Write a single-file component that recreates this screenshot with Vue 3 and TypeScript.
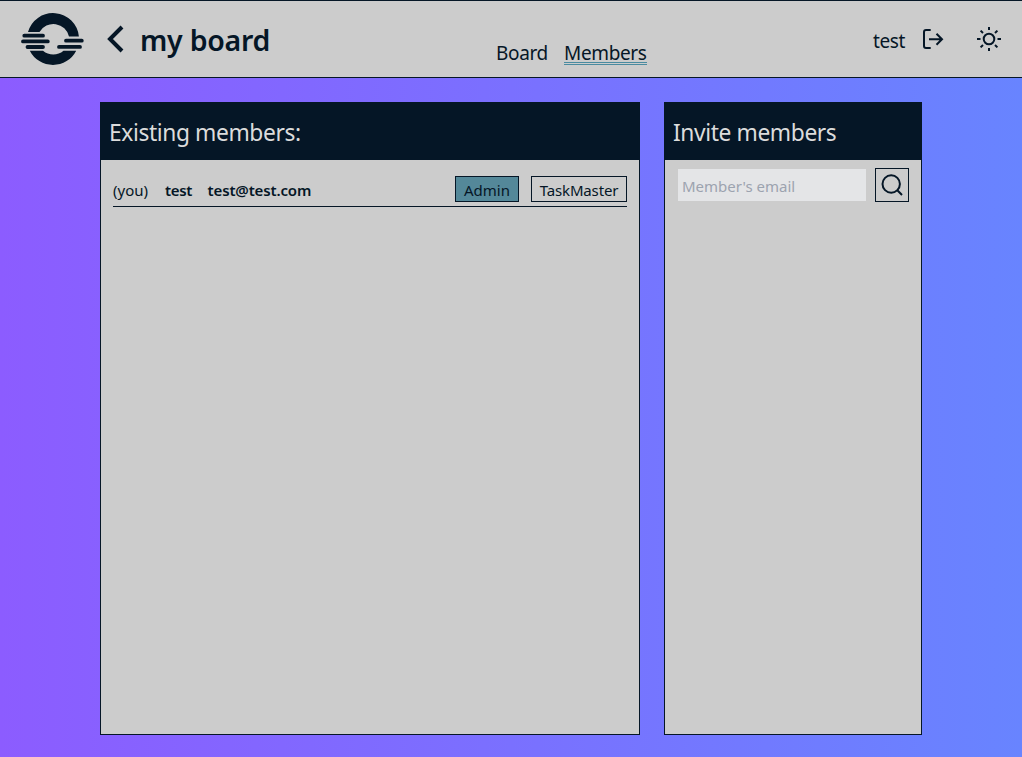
<script setup lang="ts">
import { ref } from 'vue'

interface Member {
  name: string
  email: string
  you: boolean
  roles: { label: string; active: boolean }[]
}

const email = ref('')
const members = ref<Member[]>([
  {
    name: 'test',
    email: 'test@test.com',
    you: true,
    roles: [
      { label: 'Admin', active: true },
      { label: 'TaskMaster', active: false },
    ],
  },
])
</script>

<template>
  <div class="page">
    <header class="header">
      <div class="left">
        <svg class="logo" width="64" height="54" viewBox="0 0 64 54">
          <path d="M8 20A26 26 0 0 1 58.9 24.5H49A16 16 0 0 0 19.5 20Z" />
          <path d="M9.8 38.7H23A16 16 0 0 0 43.5 38.7H56.2A26 26 0 0 1 9.8 38.7Z" />
          <g class="bars">
            <path d="M4.3 23.7H23M3 29.4H27.8M7.5 35H23M46 28.7H61.8M39 34.9H60" />
          </g>
        </svg>
        <svg class="back" width="20" height="30" viewBox="0 0 20 30">
          <path d="M17 3L5 15L17 27" />
        </svg>
        <h1 class="title">my board</h1>
      </div>
      <nav class="nav">
        <a class="link board">Board</a>
        <a class="link members">Members</a>
      </nav>
      <div class="right">
        <span class="user">test</span>
        <svg class="icon logout" width="24" height="24" viewBox="0 0 24 24">
          <path d="M9.7 3H5Q3 3 3 5V19Q3 21 5 21H9.7M8 12.2H20.8M15.5 6.7L21 12.2L15.5 17.7" />
        </svg>
        <svg class="icon sun" width="26" height="26" viewBox="0 0 26 26">
          <circle cx="13" cy="13" r="5.3" />
          <path d="M13 1V4M13 22V25M1 13H4.5M21.5 13H25M4.6 4.6L7 7M19 19L21.4 21.4M4.6 21.4L7 19M19 7L21.4 4.6" />
        </svg>
      </div>
    </header>

    <main class="content">
      <section class="panel existing">
        <h2 class="heading">Existing members:</h2>
        <ul class="list">
          <li v-for="m in members" :key="m.email" class="row">
            <span v-if="m.you" class="you">(you)</span>
            <strong class="name">{{ m.name }}</strong>
            <strong class="email">{{ m.email }}</strong>
            <div class="roles">
              <button
                v-for="r in m.roles"
                :key="r.label"
                class="role"
                :class="[r.label.toLowerCase(), { active: r.active }]"
              >{{ r.label }}</button>
            </div>
          </li>
        </ul>
      </section>

      <section class="panel invite">
        <h2 class="heading">Invite members</h2>
        <form class="search" @submit.prevent>
          <input v-model="email" class="input" type="text" placeholder="Member's email" />
          <button class="search-button" aria-label="Search">
            <svg class="icon" width="24" height="24" viewBox="0 0 24 24">
              <circle cx="11.2" cy="11" r="8.7" />
              <path d="M17.3 17.3L22 22" />
            </svg>
          </button>
        </form>
      </section>
    </main>
  </div>
</template>

<style>
body {
  margin: 0;
  overflow: hidden;
}
</style>

<style scoped>
* {
  box-sizing: border-box;
}
.page {
  height: 757px;
  display: flex;
  flex-direction: column;
  background: linear-gradient(to right, #8c5cff, #6884ff);
  color: #051626;
  font-family: 'Noto Sans', 'Open Sans', sans-serif;
}
.header {
  height: 78px;
  flex: none;
  display: grid;
  grid-template-columns: 496px 1fr 149px;
  background: #ccc;
  border-top: 1px solid #051626;
  border-bottom: 1px solid #051626;
}
.left {
  display: flex;
  align-items: flex-start;
  padding-left: 20px;
}
.logo {
  margin-top: 11px;
  fill: #051626;
  flex: none;
}
.bars {
  fill: none;
  stroke: #051626;
  stroke-width: 3.8;
  stroke-linecap: round;
}
.back {
  margin: 23px 0 0 21px;
  fill: none;
  stroke: #051626;
  stroke-width: 4;
  flex: none;
}
.title {
  margin: 18px 0 0 15px;
  font-size: 28.5px;
  line-height: 42px;
  font-weight: 600;
  letter-spacing: -0.25px;
  white-space: nowrap;
}
.nav {
  display: flex;
  align-items: flex-start;
  gap: 17px;
  padding-top: 39px;
}
.link {
  height: 25px;
  font-size: 19px;
  line-height: 26px;
  letter-spacing: -0.35px;
}
.link.board {
  width: 51px;
}
.link.members {
  width: 83px;
  border-bottom: 3px double #4a8ba0;
}
.right {
  display: flex;
  align-items: flex-start;
}
.user {
  width: 33px;
  margin-top: 27px;
  font-size: 19px;
  line-height: 26px;
  letter-spacing: -0.4px;
}
.icon {
  display: block;
  fill: none;
  stroke: #051626;
  stroke-width: 2;
  flex: none;
}
.logout {
  margin: 26px 0 0 15px;
}
.sun {
  margin: 25px 0 0 31px;
}
.content {
  flex: 1;
  display: flex;
  gap: 24px;
  padding: 24px 100px 22px;
}
.panel {
  background: #ccc;
  border: 1px solid #051626;
}
.existing {
  width: 540px;
}
.invite {
  width: 258px;
}
.heading {
  height: 57px;
  margin: 0;
  padding: 13px 0 0 8px;
  background: #051626;
  color: #dcdcdc;
  font-size: 22.8px;
  line-height: 34px;
  font-weight: 400;
  letter-spacing: -0.4px;
  white-space: nowrap;
}
.list {
  list-style: none;
  margin: 0;
  padding: 8px 12px;
}
.row {
  height: 39px;
  display: flex;
  align-items: flex-start;
  padding-top: 8px;
  border-bottom: 1px solid #051626;
  font-size: 15px;
  line-height: 28px;
}
.you {
  width: 52px;
}
.name {
  width: 42.6px;
  font-weight: 600;
  letter-spacing: -0.3px;
}
.email {
  font-weight: 600;
  letter-spacing: -0.15px;
}
.roles {
  margin-left: auto;
  display: flex;
  gap: 12px;
}
.role {
  height: 26px;
  padding: 3px 0 0;
  border: 1px solid #051626;
  background: transparent;
  color: #051626;
  font: 15px/21px 'Noto Sans', sans-serif;
  letter-spacing: -0.15px;
}
.role.admin {
  width: 64px;
  letter-spacing: 0;
}
.role.taskmaster {
  width: 96px;
}
.role.active {
  background: #548899;
}
.search {
  display: flex;
  gap: 8px;
  padding: 8px 12px;
  align-items: center;
}
.input {
  width: 190px;
  height: 34px;
  border: 1px solid #ccc;
  padding: 2px 4px 0;
  background: #e4e5e7;
  outline: none;
  color: #051626;
  font: 15px/22px 'Noto Sans', sans-serif;
}
.input::placeholder {
  color: #9ca3af;
  opacity: 1;
}
.search-button {
  width: 34px;
  height: 34px;
  padding: 4px;
  border: 1px solid #051626;
  background: transparent;
}
</style>
